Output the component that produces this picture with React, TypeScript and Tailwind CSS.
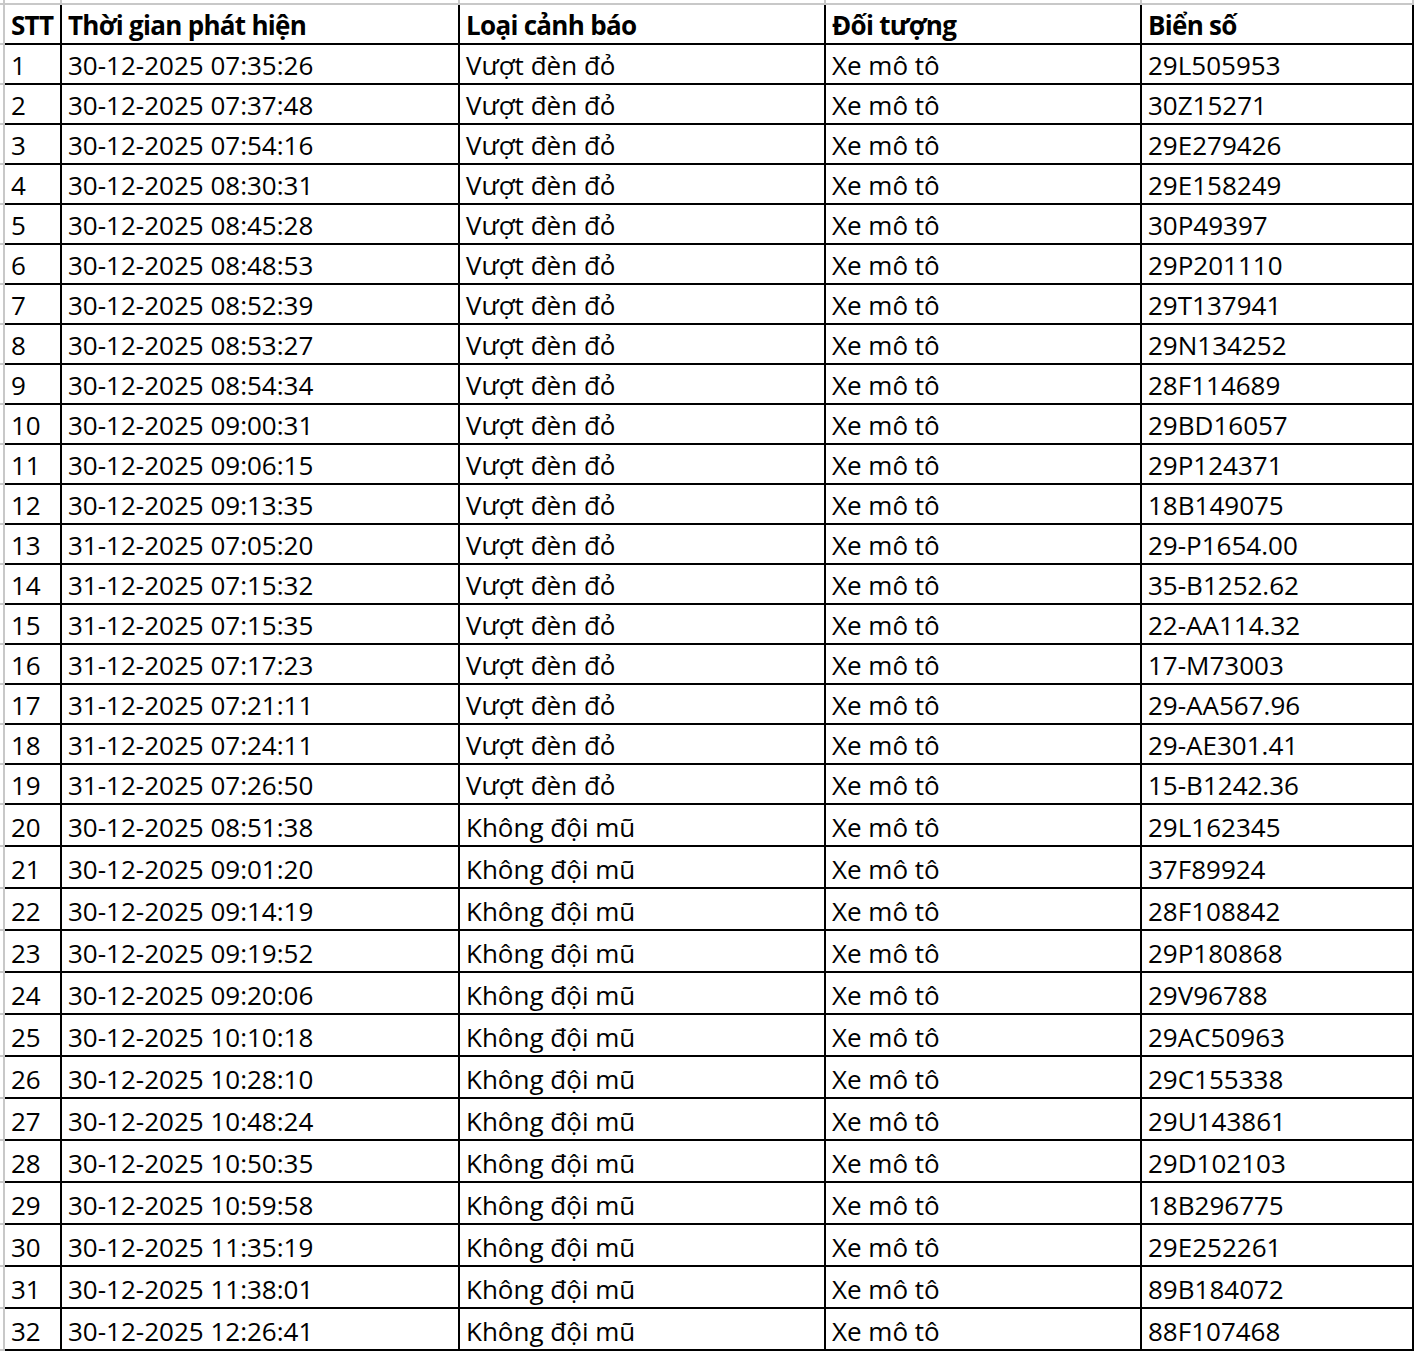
import React from 'react';

type Row = [string, string, string, string];

const rows: Row[] = [
  ['30-12-2025 07:35:26', 'Vượt đèn đỏ', 'Xe mô tô', '29L505953'],
  ['30-12-2025 07:37:48', 'Vượt đèn đỏ', 'Xe mô tô', '30Z15271'],
  ['30-12-2025 07:54:16', 'Vượt đèn đỏ', 'Xe mô tô', '29E279426'],
  ['30-12-2025 08:30:31', 'Vượt đèn đỏ', 'Xe mô tô', '29E158249'],
  ['30-12-2025 08:45:28', 'Vượt đèn đỏ', 'Xe mô tô', '30P49397'],
  ['30-12-2025 08:48:53', 'Vượt đèn đỏ', 'Xe mô tô', '29P201110'],
  ['30-12-2025 08:52:39', 'Vượt đèn đỏ', 'Xe mô tô', '29T137941'],
  ['30-12-2025 08:53:27', 'Vượt đèn đỏ', 'Xe mô tô', '29N134252'],
  ['30-12-2025 08:54:34', 'Vượt đèn đỏ', 'Xe mô tô', '28F114689'],
  ['30-12-2025 09:00:31', 'Vượt đèn đỏ', 'Xe mô tô', '29BD16057'],
  ['30-12-2025 09:06:15', 'Vượt đèn đỏ', 'Xe mô tô', '29P124371'],
  ['30-12-2025 09:13:35', 'Vượt đèn đỏ', 'Xe mô tô', '18B149075'],
  ['31-12-2025 07:05:20', 'Vượt đèn đỏ', 'Xe mô tô', '29-P1654.00'],
  ['31-12-2025 07:15:32', 'Vượt đèn đỏ', 'Xe mô tô', '35-B1252.62'],
  ['31-12-2025 07:15:35', 'Vượt đèn đỏ', 'Xe mô tô', '22-AA114.32'],
  ['31-12-2025 07:17:23', 'Vượt đèn đỏ', 'Xe mô tô', '17-M73003'],
  ['31-12-2025 07:21:11', 'Vượt đèn đỏ', 'Xe mô tô', '29-AA567.96'],
  ['31-12-2025 07:24:11', 'Vượt đèn đỏ', 'Xe mô tô', '29-AE301.41'],
  ['31-12-2025 07:26:50', 'Vượt đèn đỏ', 'Xe mô tô', '15-B1242.36'],
  ['30-12-2025 08:51:38', 'Không đội mũ', 'Xe mô tô', '29L162345'],
  ['30-12-2025 09:01:20', 'Không đội mũ', 'Xe mô tô', '37F89924'],
  ['30-12-2025 09:14:19', 'Không đội mũ', 'Xe mô tô', '28F108842'],
  ['30-12-2025 09:19:52', 'Không đội mũ', 'Xe mô tô', '29P180868'],
  ['30-12-2025 09:20:06', 'Không đội mũ', 'Xe mô tô', '29V96788'],
  ['30-12-2025 10:10:18', 'Không đội mũ', 'Xe mô tô', '29AC50963'],
  ['30-12-2025 10:28:10', 'Không đội mũ', 'Xe mô tô', '29C155338'],
  ['30-12-2025 10:48:24', 'Không đội mũ', 'Xe mô tô', '29U143861'],
  ['30-12-2025 10:50:35', 'Không đội mũ', 'Xe mô tô', '29D102103'],
  ['30-12-2025 10:59:58', 'Không đội mũ', 'Xe mô tô', '18B296775'],
  ['30-12-2025 11:35:19', 'Không đội mũ', 'Xe mô tô', '29E252261'],
  ['30-12-2025 11:38:01', 'Không đội mũ', 'Xe mô tô', '89B184072'],
  ['30-12-2025 12:26:41', 'Không đội mũ', 'Xe mô tô', '88F107468'],
];

const widths = ['w-[57px]', 'w-[398px]', 'w-[366px]', 'w-[316px]', 'w-[272px]'];

function Cell({ w, children }: { w: string; children?: React.ReactNode }) {
  return (
    <div className={`${w} shrink-0 flex items-end border-r-2 border-b-2 border-black pl-[6px] pb-[2px] whitespace-nowrap overflow-hidden`}>
      {children}
    </div>
  );
}

function Edge() {
  // gridline of the neighbouring sheet column
  return <div className="w-[5px] shrink-0 border-r-2 border-b-2 border-[#c8c8c8]" />;
}

export default function App() {
  return (
    <div className="w-[1415px] h-[1352px] overflow-hidden bg-white text-black font-['Open_Sans',sans-serif] text-[26px] leading-[32px]">
      {/* top gridline strip */}
      <div className="flex h-[5px]">
        <div className="w-[5px] shrink-0 border-r-2 border-b-2 border-[#c8c8c8]" />
        {widths.map((w, i) => (
          <div key={i} className={`${w} shrink-0 border-r-2 border-b-2 border-[#c8c8c8]`} />
        ))}
      </div>

      <div className="flex h-[40px] font-bold tracking-[-0.7px]">
        <Edge />
        <Cell w={widths[0]}>STT</Cell>
        <Cell w={widths[1]}>Thời gian phát hiện</Cell>
        <Cell w={widths[2]}>Loại cảnh báo</Cell>
        <Cell w={widths[3]}>Đối tượng</Cell>
        <Cell w={widths[4]}>Biển số</Cell>
      </div>

      {rows.map((r, i) => (
        <div key={i} className={`flex ${i < 19 ? 'h-[40px]' : 'h-[42px]'}`}>
          <Edge />
          <Cell w={widths[0]}>{i + 1}</Cell>
          <Cell w={widths[1]}>{r[0]}</Cell>
          <Cell w={widths[2]}>{r[1]}</Cell>
          <Cell w={widths[3]}>{r[2]}</Cell>
          <Cell w={widths[4]}>{r[3]}</Cell>
        </div>
      ))}
    </div>
  );
}
